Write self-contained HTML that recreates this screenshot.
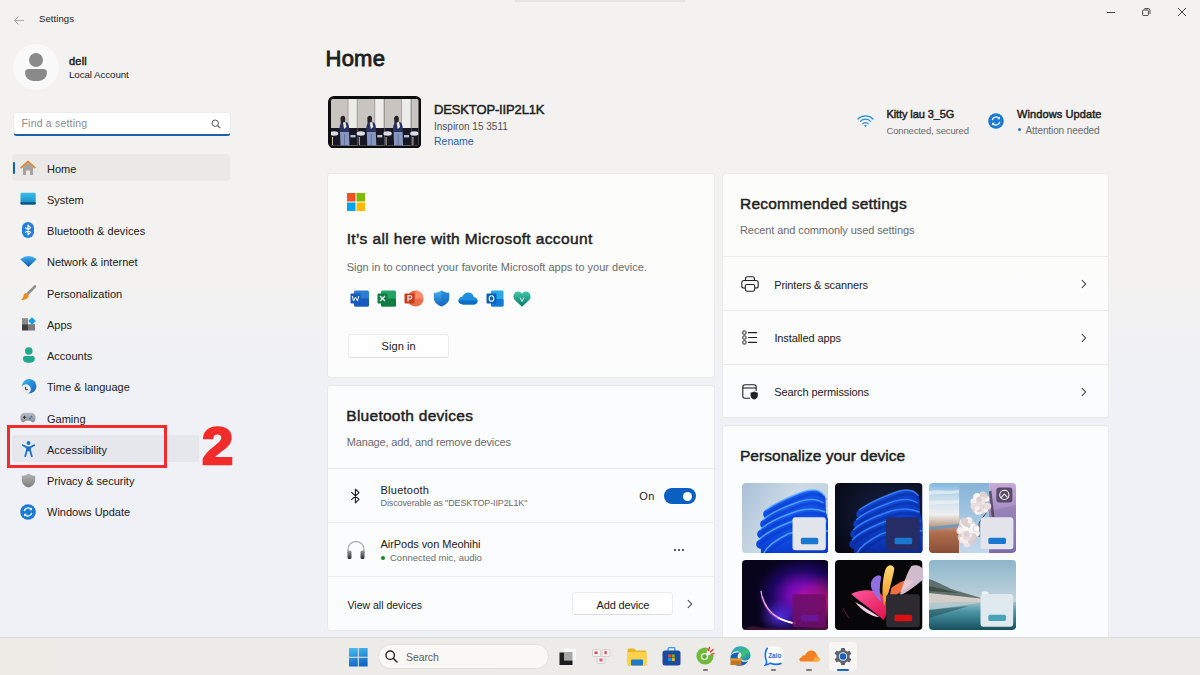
<!DOCTYPE html>
<html><head><meta charset="utf-8">
<style>
*{margin:0;padding:0;box-sizing:border-box}
html,body{width:1200px;height:675px;overflow:hidden}
body{font-family:"Liberation Sans",sans-serif;color:#1b1b1b;position:relative;
background:linear-gradient(180deg,#f3f2f0 0px,#f3f2f0 260px,#f0f1f6 400px,#f0f1f6 675px)}
.a{position:absolute;white-space:nowrap}
.x{position:absolute;white-space:nowrap;line-height:1}
.card{position:absolute;background:rgba(255,255,255,0.74);border:1px solid rgba(0,0,0,0.075);border-radius:4px}
.div{position:absolute;left:0;right:0;height:1px;background:#ebebeb}
.nav{position:absolute;left:11.5px;width:219px;height:27px;border-radius:4px}
.btn{position:absolute;background:#fefefe;border:1px solid #ececec;border-bottom-color:#dedede;border-radius:3.5px}
.tile{top:0;width:26.5px;height:46.5px;background:linear-gradient(90deg,#c4c0bc 0,#cfcbc7 62%,#f0eeea 64%,#f4f2ee 92%,#bdb9b5 94%);}
.tile:before{content:"";position:absolute;left:0;top:27px;width:26.5px;height:19.5px;background:#141827}
.tile:after{content:"";position:absolute;left:9px;top:19px;width:10px;height:27.5px;border-radius:5px 5px 0 0;background:linear-gradient(180deg,#1b1a22 0,#23305e 25%,#3a4a80 55%,#9fb0d0 62%,#6d80b0 100%)}
</style></head><body>

<!-- title bar -->
<div class="a" style="left:515px;top:0;width:170px;height:2px;background:#e6e5e3"></div>
<svg class="a" style="left:13px;top:14.5px" width="12" height="11" viewBox="0 0 12 11"><path d="M11 5.5H1.5M5.5 1.5L1.5 5.5L5.5 9.5" stroke="#ababab" stroke-width="1" fill="none"/></svg>
<div class="a" style="left:1107px;top:11.5px;width:7.5px;height:1px;background:#444"></div>
<svg class="a" style="left:1142px;top:8px" width="9" height="8" viewBox="0 0 9 8"><rect x="0.6" y="2" width="5.8" height="5.6" rx="1.2" stroke="#444" fill="none" stroke-width="1"/><path d="M2.4 0.6h3.8a1.8 1.8 0 0 1 1.8 1.8V5.8" stroke="#444" fill="none" stroke-width="1"/></svg>
<svg class="a" style="left:1177px;top:7px" width="10" height="10" viewBox="0 0 10 10"><path d="M1 1L9 9M9 1L1 9" stroke="#3a3a3a" stroke-width="0.95"/></svg>

<!-- account -->
<div class="a" style="left:13px;top:44px;width:46px;height:46px;border-radius:50%;background:#f9f9f9"></div>
<div class="a" style="left:29px;top:53px;width:14px;height:14px;border-radius:50%;background:#8a8a8a"></div>
<div class="a" style="left:25px;top:69px;width:22px;height:11.5px;border-radius:5px 5px 11px 11px;background:#8a8a8a"></div>

<!-- search -->
<div class="a" style="left:13px;top:111.5px;width:217.5px;height:24.5px;background:#fff;border-radius:4px;border:1px solid #ececec;border-bottom:2px solid #1f5fb0"></div>
<svg class="a" style="left:211px;top:119px" width="10" height="10" viewBox="0 0 10 10"><circle cx="4.2" cy="4.2" r="3.2" stroke="#555" fill="none" stroke-width="1"/><path d="M6.5 6.5L9.2 9.2" stroke="#555" stroke-width="1.1"/></svg>

<!-- nav -->
<div class="nav" style="top:153.5px;height:27.3px;width:218.5px;background:#eae9e7"></div>
<div class="a" style="left:12.5px;top:162px;width:2.6px;height:12px;border-radius:2px;background:#1a5fb4"></div>
<div class="nav" style="top:434.8px;height:27.5px;width:187.5px;border-radius:4px 0 0 4px;background:#e6e7ec"></div>

<!-- nav icons -->
<svg class="a" style="left:20px;top:160px" width="16" height="15" viewBox="0 0 16 15">
 <path d="M3 7.2L8 3L13 7.2V15H10V10.5H6V15H3Z" fill="#a3a3a3"/>
 <path d="M1.2 7.6L8 1.6L14.8 7.6" stroke="#d98532" stroke-width="1.9" fill="none" stroke-linejoin="round" stroke-linecap="round"/>
</svg>
<svg class="a" style="left:20px;top:192px" width="16" height="13" viewBox="0 0 16 13">
 <defs><linearGradient id="gs" x1="0" y1="0" x2="0" y2="1"><stop offset="0" stop-color="#35bfe6"/><stop offset="1" stop-color="#1a8cc4"/></linearGradient></defs>
 <rect x="0.5" y="0.8" width="15.2" height="11.6" rx="1" fill="url(#gs)"/>
 <rect x="0.5" y="10.2" width="15.2" height="2.2" rx="0.8" fill="#0d4f7c"/>
</svg>
<svg class="a" style="left:22px;top:222px" width="12" height="16" viewBox="0 0 12 16">
 <rect x="0" y="0" width="12" height="16" rx="6" fill="#1f7fe0"/>
 <path d="M3.2 5.4L8.6 10.4L6 12.9V3.1L8.6 5.6L3.2 10.6" stroke="#fff" stroke-width="1.2" fill="none" stroke-linejoin="round"/>
</svg>
<svg class="a" style="left:20px;top:256px" width="17" height="11" viewBox="0 0 17 11">
 <defs><linearGradient id="gw" x1="0" y1="0" x2="0" y2="1"><stop offset="0" stop-color="#3fb4f2"/><stop offset="1" stop-color="#0c56a6"/></linearGradient></defs>
 <path d="M8.5 11L0.3 3.3Q8.5 -3.2 16.7 3.3Z" fill="url(#gw)"/>
</svg>
<svg class="a" style="left:20px;top:285px" width="16" height="16" viewBox="0 0 16 16">
 <path d="M15 1.3L7.6 9" stroke="#8f8f8f" stroke-width="2.6" stroke-linecap="round"/>
 <path d="M7.5 8.2C5 7.6 3.6 9.6 3.4 11.3C3.2 13 2.3 14 0.8 14.6C3.7 15.4 7.2 14.5 8.6 11.6Z" fill="#ef8a1c"/>
</svg>
<svg class="a" style="left:22px;top:317px" width="14" height="14" viewBox="0 0 14 14">
 <rect x="0" y="1.2" width="6" height="6" fill="#8a8a8a"/>
 <rect x="0" y="7.2" width="6" height="6.3" fill="#3f3f3f"/>
 <rect x="6" y="7.2" width="7" height="6.3" fill="#7b7b7b"/>
 <path d="M10 0.2L13.8 4L10 7.8L6.2 4Z" fill="#1a9be6"/>
</svg>
<svg class="a" style="left:22px;top:347px" width="14" height="16" viewBox="0 0 14 16">
 <circle cx="6.8" cy="4" r="3.8" fill="#1fa98c"/>
 <path d="M1 11.2C1 9.8 2 9 3.2 9H10.6C11.8 9 12.8 9.8 12.8 11.2V12C12.8 14.4 10.4 15.8 6.9 15.8C3.4 15.8 1 14.4 1 12Z" fill="#1fa98c"/>
</svg>
<svg class="a" style="left:21px;top:378px" width="16" height="17" viewBox="0 0 16 17">
 <defs><linearGradient id="gt" x1="0" y1="0" x2="1" y2="1"><stop offset="0" stop-color="#3ab8f0"/><stop offset="1" stop-color="#0f62c0"/></linearGradient></defs>
 <circle cx="8.2" cy="8.2" r="7.2" fill="url(#gt)"/>
 <circle cx="5" cy="11.2" r="4.4" fill="#ebebee" stroke="#f6f6f8" stroke-width="0.8"/>
 <path d="M4.6 8.8V11.6H6.8" stroke="#3a3a3a" stroke-width="1" fill="none"/>
</svg>
<svg class="a" style="left:20px;top:412px" width="16" height="11" viewBox="0 0 16 11">
 <defs><linearGradient id="gg" x1="0" y1="0" x2="0" y2="1"><stop offset="0" stop-color="#b9bcc2"/><stop offset="1" stop-color="#8a8e96"/></linearGradient></defs>
 <path d="M4 0.8H12C14.3 0.8 15.6 3 15.6 5.6C15.6 8.6 14.5 10.4 12.8 10.4C11.4 10.4 10.8 8.8 9.8 8.8H6.2C5.2 8.8 4.6 10.4 3.2 10.4C1.5 10.4 0.4 8.6 0.4 5.6C0.4 3 1.7 0.8 4 0.8Z" fill="url(#gg)"/>
 <path d="M3 5.3H6M4.5 3.8V6.8" stroke="#333" stroke-width="1"/>
 <circle cx="11.5" cy="4.6" r="0.9" fill="#2a6fc9"/><circle cx="10" cy="6.3" r="0.9" fill="#2a6fc9"/>
</svg>
<svg class="a" style="left:22px;top:441px" width="13" height="16" viewBox="0 0 13 16">
 <circle cx="6.5" cy="2" r="1.9" fill="#1d72c6"/>
 <path d="M0.8 4.3L5 6.4V9L3.2 15.2M12.2 4.3L8 6.4V9L9.8 15.2" stroke="#1d72c6" stroke-width="1.8" fill="none" stroke-linecap="round" stroke-linejoin="round"/>
 <rect x="4.6" y="5.6" width="3.8" height="4.6" rx="1" fill="#1d72c6"/>
</svg>
<svg class="a" style="left:21px;top:473px" width="15" height="15" viewBox="0 0 15 15">
 <defs><linearGradient id="gp" x1="0" y1="0" x2="0" y2="1"><stop offset="0" stop-color="#b4b4b4"/><stop offset="1" stop-color="#7d7d7d"/></linearGradient></defs>
 <path d="M7.5 0.5C5.2 2.2 3.2 2.8 0.8 2.8V7C0.8 10.8 3.6 13.4 7.5 14.6C11.4 13.4 14.2 10.8 14.2 7V2.8C11.8 2.8 9.8 2.2 7.5 0.5Z" fill="url(#gp)"/>
</svg>
<svg class="a" style="left:20px;top:504px" width="16" height="16" viewBox="0 0 16 16">
 <circle cx="8" cy="8" r="7.8" fill="#1b7ad2"/>
 <path d="M4.2 7.2A3.9 3.9 0 0 1 11.2 5.6M11.8 8.8A3.9 3.9 0 0 1 4.8 10.4" stroke="#fff" stroke-width="1.3" fill="none"/>
 <path d="M11.8 3.6V6.3H9.1Z" fill="#fff"/><path d="M4.2 12.4V9.7H6.9Z" fill="#fff"/>
</svg>


<!-- header -->
<svg class="a" style="left:327.5px;top:95.5px" width="93.5" height="52.5" viewBox="0 0 93.5 52.5">
 <defs><clipPath id="dev"><rect x="3" y="3" width="87.5" height="46.5" rx="1.5"/></clipPath></defs>
 <rect x="0" y="0" width="93.5" height="52.5" rx="6" fill="#0c0c0c"/>
 <g clip-path="url(#dev)"><g transform="translate(3 3)"><g transform="translate(0.0 0)"><g>
 <rect x="0" y="0" width="26.8" height="47" fill="#c8c5c1"/>
 <rect x="17.2" y="0" width="8.2" height="47" fill="#eeece8"/>
 <rect x="16.6" y="0" width="0.8" height="47" fill="#9d9a96"/>
 <rect x="0" y="29" width="26.8" height="18" fill="#171824"/>
 <ellipse cx="3" cy="34.5" rx="4.2" ry="2.2" fill="#dcdde6"/>
 <rect x="1" y="38" width="1" height="8" fill="#c8b8b0"/>
 <path d="M9.5 19.5C9.5 17.5 11 16.5 12.4 16.8C14 17.2 14.6 19 14.2 21L13.5 25H9.8Z" fill="#2a2124"/>
 <path d="M8.5 33C8.2 28 8.8 24.5 11 23.5L14.5 22.8C17 23.5 18 26 18.2 30L18 34Z" fill="#28305e"/>
 <path d="M12 23.5L14.5 23L15.5 28L13 30Z" fill="#e8e4e0"/>
 <path d="M9 33H18L18.5 47H9.5Z" fill="#8696c0"/>
 <path d="M13.5 35V47" stroke="#5a6890" stroke-width="0.8"/>
 <rect x="19.5" y="36" width="5" height="2.4" fill="#b8c0d8"/>
</g></g><g transform="translate(26.8 0)"><g>
 <rect x="0" y="0" width="26.8" height="47" fill="#c8c5c1"/>
 <rect x="17.2" y="0" width="8.2" height="47" fill="#eeece8"/>
 <rect x="16.6" y="0" width="0.8" height="47" fill="#9d9a96"/>
 <rect x="0" y="29" width="26.8" height="18" fill="#171824"/>
 <ellipse cx="3" cy="34.5" rx="4.2" ry="2.2" fill="#dcdde6"/>
 <rect x="1" y="38" width="1" height="8" fill="#c8b8b0"/>
 <path d="M9.5 19.5C9.5 17.5 11 16.5 12.4 16.8C14 17.2 14.6 19 14.2 21L13.5 25H9.8Z" fill="#2a2124"/>
 <path d="M8.5 33C8.2 28 8.8 24.5 11 23.5L14.5 22.8C17 23.5 18 26 18.2 30L18 34Z" fill="#28305e"/>
 <path d="M12 23.5L14.5 23L15.5 28L13 30Z" fill="#e8e4e0"/>
 <path d="M9 33H18L18.5 47H9.5Z" fill="#8696c0"/>
 <path d="M13.5 35V47" stroke="#5a6890" stroke-width="0.8"/>
 <rect x="19.5" y="36" width="5" height="2.4" fill="#b8c0d8"/>
</g></g><g transform="translate(53.6 0)"><g>
 <rect x="0" y="0" width="26.8" height="47" fill="#c8c5c1"/>
 <rect x="17.2" y="0" width="8.2" height="47" fill="#eeece8"/>
 <rect x="16.6" y="0" width="0.8" height="47" fill="#9d9a96"/>
 <rect x="0" y="29" width="26.8" height="18" fill="#171824"/>
 <ellipse cx="3" cy="34.5" rx="4.2" ry="2.2" fill="#dcdde6"/>
 <rect x="1" y="38" width="1" height="8" fill="#c8b8b0"/>
 <path d="M9.5 19.5C9.5 17.5 11 16.5 12.4 16.8C14 17.2 14.6 19 14.2 21L13.5 25H9.8Z" fill="#2a2124"/>
 <path d="M8.5 33C8.2 28 8.8 24.5 11 23.5L14.5 22.8C17 23.5 18 26 18.2 30L18 34Z" fill="#28305e"/>
 <path d="M12 23.5L14.5 23L15.5 28L13 30Z" fill="#e8e4e0"/>
 <path d="M9 33H18L18.5 47H9.5Z" fill="#8696c0"/>
 <path d="M13.5 35V47" stroke="#5a6890" stroke-width="0.8"/>
 <rect x="19.5" y="36" width="5" height="2.4" fill="#b8c0d8"/>
</g></g><g transform="translate(80.4 0)"><g>
 <rect x="0" y="0" width="26.8" height="47" fill="#c8c5c1"/>
 <rect x="17.2" y="0" width="8.2" height="47" fill="#eeece8"/>
 <rect x="16.6" y="0" width="0.8" height="47" fill="#9d9a96"/>
 <rect x="0" y="29" width="26.8" height="18" fill="#171824"/>
 <ellipse cx="3" cy="34.5" rx="4.2" ry="2.2" fill="#dcdde6"/>
 <rect x="1" y="38" width="1" height="8" fill="#c8b8b0"/>
 <path d="M9.5 19.5C9.5 17.5 11 16.5 12.4 16.8C14 17.2 14.6 19 14.2 21L13.5 25H9.8Z" fill="#2a2124"/>
 <path d="M8.5 33C8.2 28 8.8 24.5 11 23.5L14.5 22.8C17 23.5 18 26 18.2 30L18 34Z" fill="#28305e"/>
 <path d="M12 23.5L14.5 23L15.5 28L13 30Z" fill="#e8e4e0"/>
 <path d="M9 33H18L18.5 47H9.5Z" fill="#8696c0"/>
 <path d="M13.5 35V47" stroke="#5a6890" stroke-width="0.8"/>
 <rect x="19.5" y="36" width="5" height="2.4" fill="#b8c0d8"/>
</g></g></g>
</g></svg>
<svg class="a" style="left:857px;top:114px" width="17" height="13" viewBox="0 0 17 13">
 <path d="M1 5A10.5 10.5 0 0 1 16 5M3.4 7.4A7 7 0 0 1 13.6 7.4M5.8 9.8A3.6 3.6 0 0 1 11.2 9.8" stroke="#2f8fd8" stroke-width="1.2" fill="none" stroke-linecap="round"/>
 <circle cx="8.5" cy="11.8" r="1.1" fill="#2f8fd8"/>
</svg>
<svg class="a" style="left:988px;top:113px" width="16" height="16" viewBox="0 0 16 16">
 <circle cx="8" cy="8" r="7.8" fill="#1b7ad2"/>
 <path d="M4.2 7.2A3.9 3.9 0 0 1 11.2 5.6M11.8 8.8A3.9 3.9 0 0 1 4.8 10.4" stroke="#fff" stroke-width="1.3" fill="none"/>
 <path d="M11.8 3.6V6.3H9.1Z" fill="#fff"/><path d="M4.2 12.4V9.7H6.9Z" fill="#fff"/>
</svg>


<!-- card 1 -->
<div class="card" style="left:327px;top:173px;width:388px;height:205px"></div>
<svg class="a" style="left:347px;top:193px" width="18" height="18" viewBox="0 0 18 18">
 <rect x="0" y="0" width="8.5" height="8.5" fill="#f25022"/><rect x="9.5" y="0" width="8.5" height="8.5" fill="#7fba00"/>
 <rect x="0" y="9.5" width="8.5" height="8.5" fill="#00a4ef"/><rect x="9.5" y="9.5" width="8.5" height="8.5" fill="#ffb900"/>
</svg>
<!-- app icons -->
<svg class="a" style="left:350px;top:290px" width="20" height="17" viewBox="0 0 20 17">
 <rect x="4" y="0.5" width="15" height="16" rx="1.5" fill="#2b7cd3"/><rect x="4" y="8.5" width="15" height="8" rx="1.5" fill="#185abd"/>
 <rect x="0.5" y="3.5" width="10" height="10" rx="1" fill="#185abd"/><path d="M2.2 6L3.6 11L5.5 7L7.4 11L8.8 6" stroke="#fff" stroke-width="1" fill="none"/>
</svg>
<svg class="a" style="left:377px;top:290px" width="20" height="17" viewBox="0 0 20 17">
 <rect x="4" y="0.5" width="15" height="16" rx="1.5" fill="#21a366"/><rect x="4" y="8.5" width="15" height="8" rx="1.5" fill="#107c41"/>
 <rect x="0.5" y="3.5" width="10" height="10" rx="1" fill="#107c41"/><path d="M3 6L8 11M8 6L3 11" stroke="#fff" stroke-width="1.2"/>
</svg>
<svg class="a" style="left:404px;top:290px" width="20" height="17" viewBox="0 0 20 17">
 <circle cx="11.5" cy="8.5" r="8" fill="#ed6c47"/><path d="M11.5 0.5A8 8 0 0 1 19.5 8.5H11.5Z" fill="#ff8f6b"/>
 <rect x="0.5" y="3.5" width="10" height="10" rx="1" fill="#c43e1c"/><path d="M4 11.5V5.8H6.2A1.6 1.6 0 0 1 6.2 9H4" stroke="#fff" stroke-width="1.1" fill="none"/>
</svg>
<svg class="a" style="left:433px;top:290px" width="17" height="17" viewBox="0 0 17 17">
 <defs><linearGradient id="gd" x1="0" y1="0" x2="0" y2="1"><stop offset="0" stop-color="#46b4f0"/><stop offset="1" stop-color="#1060c0"/></linearGradient></defs>
 <path d="M8.5 0.5C6 2.2 3.5 2.8 0.8 2.8V8C0.8 12 4 14.8 8.5 16.5C13 14.8 16.2 12 16.2 8V2.8C13.5 2.8 11 2.2 8.5 0.5Z" fill="url(#gd)"/>
 <path d="M8.5 0.5V16.5C13 14.8 16.2 12 16.2 8V2.8C13.5 2.8 11 2.2 8.5 0.5Z" fill="#1a70c8" opacity="0.55"/>
</svg>
<svg class="a" style="left:458px;top:292px" width="20" height="13" viewBox="0 0 20 13">
 <path d="M5 12.5C2.2 12.5 0.4 10.8 0.4 8.6C0.4 6.4 2 4.8 4.3 4.7C5.2 2 7.6 0.4 10.3 0.4C13.2 0.4 15.4 2.4 15.9 5C18 5.2 19.6 6.8 19.6 8.9C19.6 11 17.9 12.5 15.8 12.5Z" fill="#1e90e0"/>
 <path d="M5 12.5C2.2 12.5 0.4 10.8 0.4 8.6H19.6C19.6 11 17.9 12.5 15.8 12.5Z" fill="#0f6cc0"/>
</svg>
<svg class="a" style="left:486px;top:290px" width="18" height="17" viewBox="0 0 18 17">
 <rect x="5" y="0.5" width="12.5" height="16" rx="1.3" fill="#28a8ea"/><rect x="5" y="9" width="12.5" height="7.5" rx="1.3" fill="#0f78d4"/>
 <rect x="0.5" y="3.5" width="10" height="10" rx="1" fill="#0a5fb4"/><ellipse cx="5.5" cy="8.5" rx="2.3" ry="2.8" stroke="#fff" stroke-width="1.1" fill="none"/>
</svg>
<svg class="a" style="left:513px;top:291px" width="18" height="16" viewBox="0 0 18 16">
 <defs><linearGradient id="gf" x1="0" y1="0" x2="0" y2="1"><stop offset="0" stop-color="#3fc8a8"/><stop offset="1" stop-color="#0b7a6a"/></linearGradient></defs>
 <path d="M9 15.8L1.8 9C-0.6 6.6 0.2 1.2 4.6 0.6C6.6 0.3 8 1.4 9 2.8C10 1.4 11.4 0.3 13.4 0.6C17.8 1.2 18.6 6.6 16.2 9Z" fill="url(#gf)"/>
 <path d="M7 6.5L9 10.5L11 6.5" stroke="#d8f5ea" stroke-width="1" fill="none"/>
</svg>
<div class="btn" style="left:347.5px;top:333.8px;width:101px;height:23.8px"></div>


<!-- card 2 -->
<div class="card" style="left:327px;top:385px;width:388px;height:246px">
  <div class="div" style="top:82px"></div>
  <div class="div" style="top:136px"></div>
  <div class="div" style="top:190px"></div>
</div>
<svg class="a" style="left:350px;top:487px" width="11" height="18" viewBox="0 0 11 18">
 <path d="M1.3 5.2L9 12.3L5.4 15.8V2.2L9 5.7L1.3 12.8" stroke="#1b1b1b" stroke-width="1.1" fill="none" stroke-linejoin="round"/>
</svg>
<div class="a" style="left:664px;top:488px;width:32px;height:16px;border-radius:8px;background:#0a5fc2"></div>
<div class="a" style="left:682.5px;top:491.5px;width:9.5px;height:9.5px;border-radius:50%;background:#fff"></div>
<svg class="a" style="left:346px;top:540px" width="20" height="20" viewBox="0 0 20 20">
 <defs><linearGradient id="gh" x1="0" y1="0" x2="0" y2="1"><stop offset="0" stop-color="#9a9a9a"/><stop offset="1" stop-color="#2a2a2a"/></linearGradient></defs>
 <path d="M2 13V9.5A8 8 0 0 1 18 9.5V13" stroke="#b0b0b0" stroke-width="1.4" fill="none"/>
 <rect x="1.5" y="10.5" width="4" height="8.5" rx="1.5" fill="url(#gh)"/><rect x="14.5" y="10.5" width="4" height="8.5" rx="1.5" fill="url(#gh)"/>
</svg>
<div class="a" style="left:380.5px;top:555.5px;width:4px;height:4px;border-radius:50%;background:#138a1c"></div>
<div class="a" style="left:674px;top:549px;width:2px;height:2px;background:#222;border-radius:1px"></div>
<div class="a" style="left:678px;top:549px;width:2px;height:2px;background:#222;border-radius:1px"></div>
<div class="a" style="left:682px;top:549px;width:2px;height:2px;background:#222;border-radius:1px"></div>
<div class="btn" style="left:572.3px;top:591.5px;width:100.8px;height:23.8px"></div>
<svg class="a" style="left:685px;top:598px" width="9" height="12" viewBox="0 0 9 12"><path d="M2.8 2L6.6 6L2.8 10" stroke="#333" stroke-width="1.05" fill="none"/></svg>


<!-- card 3 -->
<div class="card" style="left:722px;top:173px;width:387px;height:245px">
  <div class="div" style="top:82px"></div>
  <div class="div" style="top:136px"></div>
  <div class="div" style="top:190px"></div>
</div>
<svg class="a" style="left:741px;top:276px" width="18" height="16" viewBox="0 0 18 16">
 <path d="M4.5 4.5V2.8A2 2 0 0 1 6.5 0.8H11.5A2 2 0 0 1 13.5 2.8V4.5" stroke="#222" stroke-width="1.1" fill="none"/>
 <path d="M4.3 12H2.8A2 2 0 0 1 0.8 10V6.5A2 2 0 0 1 2.8 4.5H15.2A2 2 0 0 1 17.2 6.5V10A2 2 0 0 1 15.2 12H13.7" stroke="#222" stroke-width="1.1" fill="none"/>
 <rect x="4.3" y="8.5" width="9.4" height="6.7" rx="1.6" stroke="#222" stroke-width="1.1" fill="none"/>
</svg>
<svg class="a" style="left:742px;top:330px" width="16" height="15" viewBox="0 0 16 15">
 <rect x="0.8" y="1" width="3.2" height="3.2" rx="0.8" stroke="#222" stroke-width="1" fill="none"/>
 <rect x="0.8" y="5.9" width="3.2" height="3.2" rx="0.8" stroke="#222" stroke-width="1" fill="none"/>
 <rect x="0.8" y="10.8" width="3.2" height="3.2" rx="0.8" stroke="#222" stroke-width="1" fill="none"/>
 <path d="M6 2.6H15M6 7.5H15M6 12.4H15" stroke="#222" stroke-width="1.1"/>
</svg>
<svg class="a" style="left:742px;top:384px" width="17" height="16" viewBox="0 0 17 16">
 <path d="M8 14.3H3A2.2 2.2 0 0 1 0.8 12.1V3A2.2 2.2 0 0 1 3 0.8H12A2.2 2.2 0 0 1 14.2 3V7" stroke="#222" stroke-width="1.1" fill="none"/>
 <path d="M0.8 4H14.2" stroke="#222" stroke-width="1.1"/>
 <path d="M12.2 7.2C11 8.2 10 8.5 8.6 8.5V11.4C8.6 13.4 10 14.8 12.2 15.6C14.4 14.8 15.8 13.4 15.8 11.4V8.5C14.4 8.5 13.4 8.2 12.2 7.2Z" fill="#222"/>
</svg>
<svg class="a" style="left:1079px;top:278px" width="9" height="12" viewBox="0 0 9 12"><path d="M2.8 2L6.6 6L2.8 10" stroke="#333" stroke-width="1.05" fill="none"/></svg>
<svg class="a" style="left:1079px;top:332px" width="9" height="12" viewBox="0 0 9 12"><path d="M2.8 2L6.6 6L2.8 10" stroke="#333" stroke-width="1.05" fill="none"/></svg>
<svg class="a" style="left:1079px;top:386px" width="9" height="12" viewBox="0 0 9 12"><path d="M2.8 2L6.6 6L2.8 10" stroke="#333" stroke-width="1.05" fill="none"/></svg>


<!-- card 4 -->
<div class="card" style="left:722px;top:425px;width:387px;height:230px"></div>
<!-- thumbs -->
<svg class="a thumb" style="left:741.5px;top:482.8px" width="86.5" height="70" viewBox="0 0 87 70" preserveAspectRatio="none">
 <defs>
  <linearGradient id="t1bg" x1="0" y1="0" x2="1" y2="0.5"><stop offset="0" stop-color="#a9c0d6"/><stop offset="0.55" stop-color="#cddae6"/><stop offset="1" stop-color="#bccfe0"/></linearGradient>
  <linearGradient id="PA" x1="0" y1="0" x2="0.3" y2="1"><stop offset="0" stop-color="#2470ff"/><stop offset="0.35" stop-color="#1050e8"/><stop offset="1" stop-color="#0a3cd0"/></linearGradient>
  <linearGradient id="PB" x1="0" y1="0" x2="0.3" y2="1"><stop offset="0" stop-color="#2060f0"/><stop offset="0.35" stop-color="#0c40c8"/><stop offset="1" stop-color="#0a2aa0"/></linearGradient>
  <clipPath id="cr"><rect width="87" height="70" rx="4"/></clipPath>
 </defs>
 <g clip-path="url(#cr)">
 <rect width="87" height="70" fill="url(#t1bg)"/>
 <path d="M26 36C20 35 20 29 24 27C32 21 45 15 58 10C68 6 78 5 83 13C86 21 82 29 87 37L87 70L26 70Z" fill="url(#PA)"/>
 <path d="M24 27C32 21 45 15 58 10C68 6 78 5 83 13" transform="translate(1.5 4)" stroke="#0a2ab8" stroke-width="3" fill="none" opacity="0.35"/><path d="M24 27C32 21 45 15 58 10C68 6 78 5 83 13" stroke="#5aaeff" stroke-width="1.4" fill="none" opacity="0.85"/>
 <path d="M23 46C17 45 17 39 21 37C28 30 40 25 54 20C64 16 74 14 82 20C85 26 84 32 87 40L87 70L23 70Z" fill="url(#PA)"/>
 <path d="M21 37C28 30 40 25 54 20C64 16 74 14 82 20" transform="translate(1.5 4)" stroke="#0a2ab8" stroke-width="3" fill="none" opacity="0.35"/><path d="M21 37C28 30 40 25 54 20C64 16 74 14 82 20" stroke="#5aaeff" stroke-width="1.4" fill="none" opacity="0.85"/>
 <path d="M20 56C14 55 14 49 18 47C25 40 36 35 50 30C60 26 72 24 84 29L87 70L20 70Z" fill="url(#PA)"/>
 <path d="M18 47C25 40 36 35 50 30C60 26 72 24 84 29" transform="translate(1.5 4)" stroke="#0a2ab8" stroke-width="3" fill="none" opacity="0.35"/><path d="M18 47C25 40 36 35 50 30C60 26 72 24 84 29" stroke="#5aaeff" stroke-width="1.4" fill="none" opacity="0.85"/>
 <path d="M19 66C13 65 13 59 17 57C23 50 34 45 46 40C56 36 68 34 85 38L87 70L19 70Z" fill="url(#PA)"/>
 <path d="M17 57C23 50 34 45 46 40C56 36 68 34 85 38" transform="translate(1.5 4)" stroke="#0a2ab8" stroke-width="3" fill="none" opacity="0.35"/><path d="M17 57C23 50 34 45 46 40C56 36 68 34 85 38" stroke="#5aaeff" stroke-width="1.4" fill="none" opacity="0.85"/>
 <path d="M22 70C26 62 36 56 46 51C56 47 68 45 87 48L87 70Z" fill="url(#PA)"/>
 <path d="M22 70C26 62 36 56 46 51C56 47 68 45 87 48" transform="translate(1.5 4)" stroke="#0a2ab8" stroke-width="3" fill="none" opacity="0.35"/><path d="M22 70C26 62 36 56 46 51C56 47 68 45 87 48" stroke="#5aaeff" stroke-width="1.4" fill="none" opacity="0.85"/>
 <rect x="50.8" y="34.2" width="33.5" height="33" rx="3" fill="#e3e5ec"/>
 <rect x="59.2" y="54.8" width="17.5" height="6.4" rx="1.5" fill="#1a78d0"/>
 </g>
</svg>
<svg class="a thumb" style="left:835px;top:482.8px" width="87.5" height="70" viewBox="0 0 87 70" preserveAspectRatio="none">
 <defs>
  <radialGradient id="t2bg" cx="0.65" cy="0.45" r="0.8"><stop offset="0" stop-color="#18224a"/><stop offset="1" stop-color="#060912"/></radialGradient>
 </defs>
 <g clip-path="url(#cr)">
 <rect width="87" height="70" fill="url(#t2bg)"/>
 <path d="M26 36C20 35 20 29 24 27C32 21 45 15 58 10C68 6 78 5 83 13C86 21 82 29 87 37L87 70L26 70Z" fill="url(#PB)"/>
 <path d="M24 27C32 21 45 15 58 10C68 6 78 5 83 13" transform="translate(1.5 4)" stroke="#061c80" stroke-width="3" fill="none" opacity="0.35"/><path d="M24 27C32 21 45 15 58 10C68 6 78 5 83 13" stroke="#3f86ff" stroke-width="1.4" fill="none" opacity="0.85"/>
 <path d="M23 46C17 45 17 39 21 37C28 30 40 25 54 20C64 16 74 14 82 20C85 26 84 32 87 40L87 70L23 70Z" fill="url(#PB)"/>
 <path d="M21 37C28 30 40 25 54 20C64 16 74 14 82 20" transform="translate(1.5 4)" stroke="#061c80" stroke-width="3" fill="none" opacity="0.35"/><path d="M21 37C28 30 40 25 54 20C64 16 74 14 82 20" stroke="#3f86ff" stroke-width="1.4" fill="none" opacity="0.85"/>
 <path d="M20 56C14 55 14 49 18 47C25 40 36 35 50 30C60 26 72 24 84 29L87 70L20 70Z" fill="url(#PB)"/>
 <path d="M18 47C25 40 36 35 50 30C60 26 72 24 84 29" transform="translate(1.5 4)" stroke="#061c80" stroke-width="3" fill="none" opacity="0.35"/><path d="M18 47C25 40 36 35 50 30C60 26 72 24 84 29" stroke="#3f86ff" stroke-width="1.4" fill="none" opacity="0.85"/>
 <path d="M19 66C13 65 13 59 17 57C23 50 34 45 46 40C56 36 68 34 85 38L87 70L19 70Z" fill="url(#PB)"/>
 <path d="M17 57C23 50 34 45 46 40C56 36 68 34 85 38" transform="translate(1.5 4)" stroke="#061c80" stroke-width="3" fill="none" opacity="0.35"/><path d="M17 57C23 50 34 45 46 40C56 36 68 34 85 38" stroke="#3f86ff" stroke-width="1.4" fill="none" opacity="0.85"/>
 <path d="M22 70C26 62 36 56 46 51C56 47 68 45 87 48L87 70Z" fill="url(#PB)"/>
 <path d="M22 70C26 62 36 56 46 51C56 47 68 45 87 48" transform="translate(1.5 4)" stroke="#061c80" stroke-width="3" fill="none" opacity="0.35"/><path d="M22 70C26 62 36 56 46 51C56 47 68 45 87 48" stroke="#3f86ff" stroke-width="1.4" fill="none" opacity="0.85"/>
 <rect x="50.8" y="34.2" width="33.5" height="33" rx="3" fill="#252c66"/>
 <rect x="59.2" y="54.8" width="17.5" height="6.4" rx="1.5" fill="#1a78d0"/>
 </g>
</svg>
<svg class="a thumb" style="left:928.8px;top:482.8px" width="87.2" height="70" viewBox="0 0 87 70" preserveAspectRatio="none">
 <defs>
  <linearGradient id="t3a" x1="0" y1="0" x2="0" y2="1"><stop offset="0" stop-color="#7fb6e0"/><stop offset="0.2" stop-color="#c8dcea"/><stop offset="0.45" stop-color="#eef0f0"/><stop offset="0.58" stop-color="#c8b0a0"/><stop offset="0.7" stop-color="#b07050"/><stop offset="1" stop-color="#8a4e34"/></linearGradient>
  <linearGradient id="t3b" x1="0" y1="0" x2="0" y2="1"><stop offset="0" stop-color="#86b4d8"/><stop offset="1" stop-color="#c4d8ea"/></linearGradient>
  <linearGradient id="t3c" x1="0" y1="0" x2="0" y2="1"><stop offset="0" stop-color="#c8aad8"/><stop offset="0.5" stop-color="#9c84c2"/><stop offset="1" stop-color="#7c6aaa"/></linearGradient>
 </defs>
 <g clip-path="url(#cr)">
 <rect width="30" height="70" fill="url(#t3a)"/>
 <path d="M0 8C8 6 18 9 30 7V10C18 12 8 10 0 12Z" fill="#ffffff" opacity="0.5"/>
 <path d="M0 18C10 16 20 19 30 17V20C20 22 10 20 0 22Z" fill="#ffffff" opacity="0.4"/>
 <path d="M0 44L30 41V44L0 47Z" fill="#5a98c8" opacity="0.75"/>
 <rect x="30" width="30" height="70" fill="url(#t3b)"/>
 <rect x="60" width="27" height="70" fill="url(#t3c)"/>
 <path d="M60 28L87 22V44L60 50Z" fill="#8a78a8" opacity="0.5"/>
 <path d="M61 8L64 34" stroke="#3a2a38" stroke-width="2.6" opacity="0.65"/>
 <path d="M60 26L54 34L50 40V54" stroke="#3a2c30" stroke-width="0.9" fill="none"/>
 <circle cx="47.8" cy="20.8" r="2.7" fill="#dccfd0"/><circle cx="51.6" cy="21.5" r="3.0" fill="#fbf8f6"/><circle cx="48.1" cy="15.2" r="3.6" fill="#fbf8f6"/><circle cx="52.7" cy="20.9" r="2.8" fill="#efe4e2"/><circle cx="47.7" cy="13.7" r="3.5" fill="#fbf8f6"/><circle cx="55.9" cy="23.1" r="2.3" fill="#dccfd0"/><circle cx="57.2" cy="15.8" r="3.0" fill="#fbf8f6"/><circle cx="55.4" cy="27.6" r="2.8" fill="#dccfd0"/><circle cx="51.1" cy="27.8" r="3.4" fill="#f6f0ee"/><circle cx="44.6" cy="19.9" r="2.6" fill="#fbf8f6"/><circle cx="56.5" cy="26.4" r="2.8" fill="#fbf8f6"/><circle cx="53.2" cy="20.6" r="2.8" fill="#efe4e2"/><circle cx="58.5" cy="23.3" r="3.5" fill="#e8dcdc"/><circle cx="46.6" cy="26.5" r="3.6" fill="#dccfd0"/><circle cx="53.1" cy="23.8" r="2.5" fill="#dccfd0"/><circle cx="48.3" cy="13.2" r="2.9" fill="#fbf8f6"/><circle cx="50.6" cy="13.7" r="2.6" fill="#fbf8f6"/><circle cx="53.8" cy="11.8" r="3.2" fill="#e8dcdc"/><circle cx="52.8" cy="27.6" r="2.6" fill="#efe4e2"/><circle cx="45.2" cy="21.8" r="2.2" fill="#efe4e2"/><circle cx="48.2" cy="23.4" r="3.6" fill="#e8dcdc"/><circle cx="49.0" cy="28.3" r="3.5" fill="#fbf8f6"/><circle cx="50.0" cy="26.7" r="2.7" fill="#dccfd0"/><circle cx="54.9" cy="12.8" r="3.6" fill="#dccfd0"/><circle cx="48.3" cy="22.4" r="3.2" fill="#e8dcdc"/><circle cx="51.0" cy="15.6" r="2.6" fill="#e8dcdc"/><circle cx="44.2" cy="18.5" r="3.0" fill="#f6f0ee"/><circle cx="50.0" cy="21.6" r="2.4" fill="#e8dcdc"/><circle cx="51.5" cy="23.2" r="2.7" fill="#e8dcdc"/><circle cx="45.0" cy="23.2" r="3.5" fill="#e8dcdc"/><circle cx="54.0" cy="16.4" r="3.0" fill="#efe4e2"/><circle cx="49.8" cy="16.6" r="2.7" fill="#dccfd0"/><circle cx="48.2" cy="25.2" r="2.3" fill="#f6f0ee"/><circle cx="32.4" cy="49.0" r="3.1" fill="#e8dcdc"/><circle cx="34.3" cy="40.9" r="2.8" fill="#f6f0ee"/><circle cx="31.8" cy="44.4" r="2.7" fill="#efe4e2"/><circle cx="37.9" cy="58.2" r="2.4" fill="#e8dcdc"/><circle cx="43.4" cy="41.7" r="3.0" fill="#e8dcdc"/><circle cx="34.1" cy="39.1" r="2.9" fill="#efe4e2"/><circle cx="35.7" cy="57.7" r="3.0" fill="#e8dcdc"/><circle cx="36.1" cy="57.5" r="2.3" fill="#dccfd0"/><circle cx="36.2" cy="39.4" r="2.6" fill="#e8dcdc"/><circle cx="38.4" cy="52.5" r="2.6" fill="#dccfd0"/><circle cx="37.4" cy="59.9" r="2.4" fill="#f6f0ee"/><circle cx="38.6" cy="57.6" r="3.1" fill="#dccfd0"/><circle cx="37.8" cy="60.7" r="3.5" fill="#efe4e2"/><circle cx="30.6" cy="47.9" r="3.3" fill="#dccfd0"/><circle cx="47.3" cy="50.1" r="3.4" fill="#f6f0ee"/><circle cx="32.2" cy="42.4" r="2.2" fill="#dccfd0"/><circle cx="46.2" cy="51.0" r="2.2" fill="#f6f0ee"/><circle cx="33.1" cy="43.8" r="3.1" fill="#dccfd0"/><circle cx="39.7" cy="37.4" r="3.5" fill="#f6f0ee"/><circle cx="36.1" cy="42.6" r="3.4" fill="#fbf8f6"/><circle cx="34.0" cy="39.2" r="3.4" fill="#f6f0ee"/><circle cx="33.1" cy="56.6" r="3.5" fill="#efe4e2"/><circle cx="41.3" cy="58.4" r="2.3" fill="#e8dcdc"/><circle cx="34.5" cy="52.1" r="2.9" fill="#f6f0ee"/><circle cx="38.5" cy="56.2" r="2.2" fill="#f6f0ee"/><circle cx="30.9" cy="48.6" r="2.2" fill="#f6f0ee"/><circle cx="39.3" cy="48.7" r="2.4" fill="#f6f0ee"/><circle cx="36.3" cy="52.8" r="3.0" fill="#e8dcdc"/><circle cx="37.7" cy="39.3" r="2.2" fill="#fbf8f6"/><circle cx="44.3" cy="50.7" r="2.3" fill="#fbf8f6"/><circle cx="40.9" cy="56.3" r="2.7" fill="#f6f0ee"/><circle cx="41.2" cy="47.2" r="2.7" fill="#fbf8f6"/><circle cx="43.7" cy="44.2" r="3.5" fill="#fbf8f6"/><circle cx="38.3" cy="42.4" r="3.0" fill="#dccfd0"/><circle cx="31.3" cy="47.0" r="2.8" fill="#f6f0ee"/><circle cx="46.9" cy="45.7" r="3.5" fill="#e8dcdc"/><circle cx="32.2" cy="54.0" r="3.5" fill="#dccfd0"/><circle cx="44.3" cy="53.4" r="3.2" fill="#dccfd0"/><circle cx="39.6" cy="57.1" r="3.2" fill="#fbf8f6"/><circle cx="32.6" cy="56.1" r="2.3" fill="#f6f0ee"/><circle cx="40.2" cy="53.1" r="2.7" fill="#f6f0ee"/><circle cx="36.1" cy="58.2" r="2.2" fill="#f6f0ee"/><circle cx="42.1" cy="57.7" r="3.5" fill="#dccfd0"/><circle cx="35.4" cy="38.3" r="3.6" fill="#dccfd0"/><circle cx="39.2" cy="54.6" r="2.3" fill="#f6f0ee"/><circle cx="35.8" cy="50.7" r="3.4" fill="#efe4e2"/><circle cx="38.2" cy="54.2" r="3.5" fill="#e8dcdc"/><circle cx="36.6" cy="46.3" r="2.7" fill="#fbf8f6"/><circle cx="47.4" cy="45.8" r="2.5" fill="#fbf8f6"/><circle cx="37.5" cy="50.8" r="3.0" fill="#dccfd0"/>
 <rect x="67.2" y="4.4" width="16" height="15" rx="3" fill="#5a4a6a"/>
 <circle cx="75.2" cy="11.9" r="4.6" stroke="#fff" stroke-width="1" fill="none"/>
 <path d="M72 14.7L75.2 11L78.4 14.7" stroke="#fff" stroke-width="1" fill="none"/>
 <rect x="51.6" y="34.2" width="32.6" height="32" rx="3" fill="#e4e4ec"/>
 <rect x="59.2" y="54.8" width="17.6" height="6.2" rx="1.5" fill="#1a78d0"/>
 </g>
</svg>
<svg class="a thumb" style="left:741.5px;top:559.6px" width="86.5" height="70" viewBox="0 0 87 70" preserveAspectRatio="none">
 <defs>
  <radialGradient id="t4bg" cx="0.7" cy="0.5" r="0.55"><stop offset="0" stop-color="#a010b8"/><stop offset="0.3" stop-color="#700ab0"/><stop offset="0.65" stop-color="#1c0660"/><stop offset="1" stop-color="#08041c"/></radialGradient>
  <radialGradient id="t4r" cx="1" cy="0.62" r="0.42"><stop offset="0" stop-color="#e0185a" stop-opacity="0.75"/><stop offset="1" stop-color="#e0185a" stop-opacity="0"/></radialGradient>
  <radialGradient id="t4b" cx="0.44" cy="0.8" r="0.25"><stop offset="0" stop-color="#5a30f0" stop-opacity="0.85"/><stop offset="1" stop-color="#5a30f0" stop-opacity="0"/></radialGradient>
 </defs>
 <g clip-path="url(#cr)">
 <rect width="87" height="70" fill="url(#t4bg)"/>
 <rect width="87" height="70" fill="url(#t4r)"/>
 <rect width="87" height="70" fill="url(#t4b)"/>
 <path d="M19 31C21 44 28 53 37 58C42 61 46 62 54 63.5" stroke="#ffd8f8" stroke-width="1.1" fill="none"/><path d="M36 57.5C42 61 46 62 54 63.5" stroke="#ffffff" stroke-width="1.8" fill="none"/>
 <path d="M20 36C23 47 29 55 38 59" stroke="#e070d0" stroke-width="2.6" fill="none" opacity="0.4"/>
 <path d="M10 66C30 70 60 70 87 64V70H0Z" fill="#7a2050" opacity="0.45"/>
 <rect x="50.8" y="34.2" width="33.5" height="33" rx="3" fill="#6e0e6a" opacity="0.9"/>
 <rect x="59.2" y="54.8" width="17.5" height="6.4" rx="1.5" fill="#6a18a8" opacity="0.7"/>
 </g>
</svg>
<svg class="a thumb" style="left:835px;top:559.6px" width="87.5" height="70" viewBox="0 0 87 70" preserveAspectRatio="none">
 <defs>
  <linearGradient id="p1" x1="0" y1="0" x2="1" y2="1"><stop offset="0" stop-color="#ff5aa0"/><stop offset="1" stop-color="#e0104a"/></linearGradient>
  <linearGradient id="p2" x1="0" y1="0" x2="0" y2="1"><stop offset="0" stop-color="#ffd870"/><stop offset="1" stop-color="#f09020"/></linearGradient>
 </defs>
 <g clip-path="url(#cr)">
 <rect width="87" height="70" fill="#070609"/>
 <path d="M16 34C26 29 38 29 46 34C52 42 54 54 48 60C40 52 28 44 16 34Z" fill="url(#p1)"/>
 <path d="M20 42C28 46 36 52 44 57C36 57 26 50 20 42Z" fill="#f4d0e8"/>
 <path d="M36 22C38 16 44 14 46 17C44 26 44 34 46 42C40 36 34 28 36 22Z" fill="#9070e0"/>
 <path d="M50 10C52 4 58 4 59 9C57 20 53 34 49 46C46 34 47 20 50 10Z" fill="url(#p2)"/>
 <path d="M56 28C64 22 72 18 78 21C72 28 64 34 54 38Z" fill="#f07040"/>
 <path d="M76 6C80 4 86 6 87 9V20C80 26 72 32 64 36C68 24 72 12 76 6Z" fill="#e8d0e4" opacity="0.9"/>
 <path d="M8 48C10 52 12 56 14 58" stroke="#5a2028" stroke-width="1" fill="none"/>
 <rect x="50.8" y="34.2" width="33.5" height="33" rx="3" fill="#2e2a32"/>
 <rect x="59.2" y="54.8" width="17.5" height="6.4" rx="1.5" fill="#dd1010"/>
 </g>
</svg>
<svg class="a thumb" style="left:928.8px;top:559.6px" width="87.2" height="70" viewBox="0 0 87 70" preserveAspectRatio="none">
 <defs>
  <linearGradient id="t6s" x1="0" y1="0" x2="0" y2="1"><stop offset="0" stop-color="#8db6c8"/><stop offset="1" stop-color="#c4d6de"/></linearGradient>
  <linearGradient id="t6w" x1="0" y1="0" x2="0" y2="1"><stop offset="0" stop-color="#9cc0c8"/><stop offset="0.35" stop-color="#4a94a4"/><stop offset="1" stop-color="#17505f"/></linearGradient>
 </defs>
 <g clip-path="url(#cr)">
 <rect width="87" height="44" fill="url(#t6s)"/>
 <rect y="42" width="87" height="28" fill="url(#t6w)"/>
 <path d="M0 19C6 21 14 25 22 29C32 32 42 35 52 38L53 40L0 34Z" fill="#3a4a40" opacity="0.7"/><path d="M0 26C10 28 20 31 30 33L0 31Z" fill="#1e2a24" opacity="0.5"/>
 <path d="M0 33L52 38.5L55 42L0 43Z" fill="#d4cdc8"/>
 <path d="M0 43L55 42L30 46L0 50Z" fill="#b8ccd0" opacity="0.9"/>
 <path d="M0 50L40 46L0 58Z" fill="#1e4048" opacity="0.45"/>
 <ellipse cx="56" cy="33" rx="3.5" ry="1.8" fill="#f4f8fa" opacity="0.9"/>
 <rect x="51.4" y="34" width="32.6" height="32.7" rx="3" fill="#e0eaee"/>
 <rect x="59.2" y="54.7" width="17.6" height="6.3" rx="1.5" fill="#4aa2b8"/>
 </g>
</svg>

<!-- taskbar -->
<div class="a" style="left:0;top:636.5px;width:1200px;height:38.5px;background:linear-gradient(90deg,#eeebe7 0%,#edebe8 50%,#ecebea 100%);border-top:1px solid #dcdcde"></div>
<svg class="a" style="left:348.5px;top:647.5px" width="19" height="19" viewBox="0 0 19 19">
 <defs><linearGradient id="wl" x1="0" y1="0" x2="0.3" y2="1"><stop offset="0" stop-color="#48c0f4"/><stop offset="1" stop-color="#1268c4"/></linearGradient></defs>
 <path d="M0 0H8.8V8.8H0ZM9.8 0H18.6V8.8H9.8ZM0 9.8H8.8V18.6H0ZM9.8 9.8H18.6V18.6H9.8Z" fill="url(#wl)"/>
</svg>
<div class="a" style="left:377.5px;top:644px;width:171px;height:24.5px;border-radius:12.5px;background:#faf8f5;border:1px solid #e2dfdb"></div>
<svg class="a" style="left:385px;top:650px" width="13" height="13" viewBox="0 0 13 13"><circle cx="5.2" cy="5.2" r="4.2" stroke="#2a2a2a" stroke-width="1.4" fill="none"/><path d="M8.2 8.2L12 12" stroke="#2a2a2a" stroke-width="1.5" stroke-linecap="round"/></svg>
<!-- task view -->
<svg class="a" style="left:558.5px;top:647.5px" width="18" height="18" viewBox="0 0 18 18">
 <rect x="5" y="0.5" width="12" height="12" fill="#f6f6f6"/>
 <rect x="5" y="4" width="8.5" height="8.5" fill="#a6a6a6"/>
 <path d="M0.5 4.5H5V12.5H13.5V17H0.5Z" fill="#1e1e1e"/>
</svg>
<!-- unikey -->
<svg class="a" style="left:592px;top:649px" width="20" height="15" viewBox="0 0 20 15">
 <rect x="0.5" y="0.5" width="8" height="7" rx="1" fill="#f4f0f0" stroke="#c8c0c0" stroke-width="0.6"/>
 <rect x="10" y="0.5" width="8" height="7" rx="1" fill="#f4f0f0" stroke="#c8c0c0" stroke-width="0.6"/>
 <rect x="5" y="7.5" width="8" height="7" rx="1" fill="#f4f0f0" stroke="#c8c0c0" stroke-width="0.6"/>
 <rect x="2.5" y="2.5" width="3" height="2.5" fill="#d84060"/><rect x="12.5" y="2.2" width="2.2" height="3" fill="#d84060"/><rect x="7.5" y="9.5" width="3" height="3" fill="#d86080"/>
</svg>
<!-- folder -->
<svg class="a" style="left:627px;top:647.5px" width="20" height="18" viewBox="0 0 20 18">
 <path d="M0.5 2A1.5 1.5 0 0 1 2 0.5H7L9 2.5H18A1.5 1.5 0 0 1 19.5 4V16A1.5 1.5 0 0 1 18 17.5H2A1.5 1.5 0 0 1 0.5 16Z" fill="#e8b32a"/>
 <rect x="0.5" y="4" width="19" height="13.5" rx="1.2" fill="#ffd24a"/>
 <rect x="4" y="11.5" width="12" height="6" rx="1" fill="#1a78d0"/>
</svg>
<!-- store -->
<svg class="a" style="left:661.5px;top:647px" width="19" height="19" viewBox="0 0 19 19">
 <path d="M6 4V2.2A1.7 1.7 0 0 1 7.7 0.5H11.3A1.7 1.7 0 0 1 13 2.2V4" stroke="#3a9ae8" stroke-width="1.3" fill="none"/>
 <rect x="0.5" y="3.5" width="18" height="15" rx="2.5" fill="#1a4aa0"/>
 <rect x="6.2" y="7.5" width="3" height="3" fill="#f25022"/><rect x="9.8" y="7.5" width="3" height="3" fill="#7fba00"/>
 <rect x="6.2" y="11.1" width="3" height="3" fill="#00a4ef"/><rect x="9.8" y="11.1" width="3" height="3" fill="#ffb900"/>
</svg>
<!-- coccoc -->
<svg class="a" style="left:696px;top:646px" width="19" height="19" viewBox="0 0 19 19">
 <circle cx="9" cy="10" r="8.6" fill="#6fba3a"/>
 <path d="M9 10L13.5 0L19 0L19 8Z" fill="#edebe8"/>
 <circle cx="8.5" cy="10.5" r="3.6" fill="#e8f4d8"/><circle cx="8.5" cy="10.5" r="2.2" fill="#5aa838"/>
 <path d="M12.5 4.5L13.5 1.5M14.5 6L17 3.5M15.2 8.4L18 7.4" stroke="#e83a3a" stroke-width="1.4" stroke-linecap="round"/>
</svg>
<div class="a" style="left:702.5px;top:668.5px;width:5.5px;height:2px;border-radius:1px;background:#7a7a7a"></div>
<!-- edge -->
<svg class="a" style="left:729.5px;top:646px" width="21" height="20" viewBox="0 0 21 20">
 <defs><linearGradient id="ed" x1="0" y1="0" x2="1" y2="1"><stop offset="0" stop-color="#2a9ae0"/><stop offset="0.6" stop-color="#3ac07a"/><stop offset="1" stop-color="#1a70c0"/></linearGradient></defs>
 <path d="M10.5 0.3C16.2 0.3 20.5 4.4 20.5 9.2C20.5 12.8 17.8 14.6 14.8 14.6C12 14.6 10.4 13.2 10.4 11.6C10.4 10.4 11.4 10.2 11.4 9C11.4 7 9.2 5.2 6.6 5.2C3.2 5.2 0.5 8 0.5 11.4C0.5 5 4.8 0.3 10.5 0.3Z" fill="url(#ed)"/>
 <path d="M0.5 11.4C0.5 16 4.2 19.7 9.8 19.7C13.6 19.7 16.6 17.6 18.2 15.2C17 15.6 15.8 15.8 14.6 15.8C10.6 15.8 7.6 13.2 7.6 10.8C7.6 9 8.6 7.6 9.8 6.6C5 6.2 0.5 8 0.5 11.4Z" fill="#1560b8"/>
 <rect x="0.5" y="12.5" width="11" height="6.5" fill="#c8741c"/>
 <rect x="0.5" y="12.5" width="11" height="2" fill="#e89a3a"/>
</svg>
<!-- zalo -->
<svg class="a" style="left:764px;top:646px" width="20" height="20" viewBox="0 0 20 20">
 <rect x="0.5" y="0.5" width="19" height="19" rx="7" fill="#ffffff"/>
 <path d="M3.5 1.8C1.2 5 0.8 10.5 2.4 15C3 16.5 2.6 17.8 1.4 19C4 18.8 5.6 17.8 6.4 17.2C9.6 18.6 14.4 18.6 17.6 17.2" stroke="#1a6ae8" stroke-width="1.6" fill="none"/>
 <text x="10.8" y="12.2" font-family="Liberation Sans" font-size="6.4" font-weight="bold" fill="#1a6ae8" text-anchor="middle">Zalo</text>
</svg>
<div class="a" style="left:770.5px;top:668.5px;width:5.5px;height:2px;border-radius:1px;background:#7a7a7a"></div>
<!-- cloudflare -->
<svg class="a" style="left:798.5px;top:649.5px" width="21" height="12" viewBox="0 0 21 12">
 <path d="M2.5 11.5C1.2 11.5 0.3 10.6 0.3 9.5C0.3 8.3 1.2 7.5 2.4 7.4C3 5.8 4.4 5 6 5.3C7.2 2.2 9.8 0.4 12.4 0.4C15.6 0.4 18 2.8 18.2 6.4C19.8 6.8 20.7 8.2 20.7 9.6C20.7 10.6 20 11.5 19 11.5Z" fill="#f38020"/>
 <path d="M14 11.5L15.4 7.5H20.2C20.6 8.2 20.7 9 20.7 9.6C20.7 10.6 20 11.5 19 11.5Z" fill="#faae40"/>
</svg>
<div class="a" style="left:806px;top:668.5px;width:5.5px;height:2px;border-radius:1px;background:#7a7a7a"></div>
<!-- settings -->
<div class="a" style="left:828.5px;top:641.5px;width:28.5px;height:29.5px;border-radius:4px;background:#f7f6f4"></div>
<svg class="a" style="left:833px;top:647px" width="20" height="19" viewBox="0 0 20 20">
 <path d="M8.2 0.6H11.8L12.4 3.1L14.6 4.3L17 3.5L18.8 6.6L16.9 8.3V10.8L18.8 12.5L17 15.6L14.6 14.8L12.4 16L11.8 18.5H8.2L7.6 16L5.4 14.8L3 15.6L1.2 12.5L3.1 10.8V8.3L1.2 6.6L3 3.5L5.4 4.3L7.6 3.1Z" fill="#60636b" transform="translate(0 0.45)"/>
 <circle cx="10" cy="10" r="4.4" fill="#e9ecf2"/>
 <circle cx="10" cy="10" r="3.4" fill="#1a5fb8"/>
</svg>
<div class="a" style="left:837px;top:669.3px;width:12px;height:2.2px;border-radius:1px;background:#1a63c2"></div>


<!-- texts -->
<div class="x" style="left:39.00px;top:14.26px;font-size:9.5px;letter-spacing:0.08px;color:#202020;">Settings</div>
<div class="x" style="left:69.00px;top:56.39px;font-size:11px;letter-spacing:0.2px;color:#202020;-webkit-text-stroke:0.45px #202020;">dell</div>
<div class="x" style="left:69.00px;top:69.71px;font-size:9.8px;letter-spacing:-0.1px;color:#202020;">Local Account</div>
<div class="x" style="left:21.50px;top:118.12px;font-size:10.5px;letter-spacing:0.2px;color:#8a8a8a;">Find a setting</div>
<div class="x" style="left:47.00px;top:163.69px;font-size:11px;letter-spacing:0px;color:#202020;">Home</div>
<div class="x" style="left:47.00px;top:194.89px;font-size:11px;letter-spacing:0px;color:#202020;">System</div>
<div class="x" style="left:47.00px;top:226.09px;font-size:11px;letter-spacing:0.05px;color:#202020;">Bluetooth &amp; devices</div>
<div class="x" style="left:47.00px;top:257.39px;font-size:11px;letter-spacing:0px;color:#202020;">Network &amp; internet</div>
<div class="x" style="left:47.00px;top:288.69px;font-size:11px;letter-spacing:0px;color:#202020;">Personalization</div>
<div class="x" style="left:47.00px;top:319.89px;font-size:11px;letter-spacing:0px;color:#202020;">Apps</div>
<div class="x" style="left:47.00px;top:351.09px;font-size:11px;letter-spacing:0px;color:#202020;">Accounts</div>
<div class="x" style="left:47.00px;top:382.39px;font-size:11px;letter-spacing:0px;color:#202020;">Time &amp; language</div>
<div class="x" style="left:47.00px;top:413.59px;font-size:11px;letter-spacing:0px;color:#202020;">Gaming</div>
<div class="x" style="left:47.00px;top:444.89px;font-size:11px;letter-spacing:0px;color:#202020;">Accessibility</div>
<div class="x" style="left:47.00px;top:476.09px;font-size:11px;letter-spacing:0px;color:#202020;">Privacy &amp; security</div>
<div class="x" style="left:47.00px;top:507.39px;font-size:11px;letter-spacing:0px;color:#202020;">Windows Update</div>
<div class="x" style="left:325.60px;top:48.19px;font-size:22px;letter-spacing:0.2px;color:#202020;-webkit-text-stroke:0.85px #202020;">Home</div>
<div class="x" style="left:434.00px;top:103.00px;font-size:13px;letter-spacing:-0.14px;color:#202020;-webkit-text-stroke:0.45px #202020;">DESKTOP-IIP2L1K</div>
<div class="x" style="left:434.00px;top:121.54px;font-size:10px;letter-spacing:0px;color:#505050;">Inspiron 15 3511</div>
<div class="x" style="left:434.00px;top:136.12px;font-size:10.5px;letter-spacing:0px;color:#1f5fae;">Rename</div>
<div class="x" style="left:886.50px;top:109.09px;font-size:11px;letter-spacing:-0.1px;color:#202020;-webkit-text-stroke:0.45px #202020;">Kitty lau 3_5G</div>
<div class="x" style="left:886.50px;top:125.96px;font-size:9.5px;letter-spacing:-0.15px;color:#6b6b6b;">Connected, secured</div>
<div class="x" style="left:1017.00px;top:109.09px;font-size:11px;letter-spacing:0.1px;color:#202020;-webkit-text-stroke:0.45px #202020;">Windows Update</div>
<div class="x" style="left:1025.50px;top:125.54px;font-size:10px;letter-spacing:-0.1px;color:#6b6b6b;">Attention needed</div>
<div class="x" style="left:346.70px;top:231.09px;font-size:15.5px;letter-spacing:0.38px;color:#202020;-webkit-text-stroke:0.45px #202020;">It’s all here with Microsoft account</div>
<div class="x" style="left:346.70px;top:261.59px;font-size:11px;letter-spacing:0.0px;color:#6b6b6b;">Sign in to connect your favorite Microsoft apps to your device.</div>
<div class="x" style="left:381.50px;top:340.69px;font-size:11px;letter-spacing:0.08px;color:#202020;">Sign in</div>
<div class="x" style="left:346.30px;top:407.69px;font-size:15.5px;letter-spacing:0.27px;color:#202020;-webkit-text-stroke:0.45px #202020;">Bluetooth devices</div>
<div class="x" style="left:346.70px;top:437.39px;font-size:11px;letter-spacing:-0.15px;color:#6b6b6b;">Manage, add, and remove devices</div>
<div class="x" style="left:380.50px;top:485.39px;font-size:11px;letter-spacing:0.25px;color:#202020;">Bluetooth</div>
<div class="x" style="left:380.50px;top:499.39px;font-size:9px;letter-spacing:-0.12px;color:#6b6b6b;">Discoverable as "DESKTOP-IIP2L1K"</div>
<div class="x" style="left:639.30px;top:491.39px;font-size:11px;letter-spacing:0.4px;color:#202020;">On</div>
<div class="x" style="left:380.50px;top:538.99px;font-size:11px;letter-spacing:-0.05px;color:#202020;">AirPods von Meohihi</div>
<div class="x" style="left:390.00px;top:553.26px;font-size:9.5px;letter-spacing:0px;color:#6b6b6b;">Connected mic, audio</div>
<div class="x" style="left:347.50px;top:600.12px;font-size:10.5px;letter-spacing:0px;color:#202020;">View all devices</div>
<div class="x" style="left:596.50px;top:599.69px;font-size:11px;letter-spacing:-0.16px;color:#202020;">Add device</div>
<div class="x" style="left:740.00px;top:195.59px;font-size:15.5px;letter-spacing:0.2px;color:#202020;-webkit-text-stroke:0.45px #202020;">Recommended settings</div>
<div class="x" style="left:740.00px;top:225.39px;font-size:11px;letter-spacing:-0.09px;color:#6b6b6b;">Recent and commonly used settings</div>
<div class="x" style="left:774.20px;top:279.59px;font-size:11px;letter-spacing:-0.12px;color:#202020;">Printers &amp; scanners</div>
<div class="x" style="left:774.40px;top:333.19px;font-size:11px;letter-spacing:-0.1px;color:#202020;">Installed apps</div>
<div class="x" style="left:774.20px;top:387.19px;font-size:11px;letter-spacing:-0.1px;color:#202020;">Search permissions</div>
<div class="x" style="left:740.00px;top:447.69px;font-size:15.5px;letter-spacing:0.03px;color:#202020;-webkit-text-stroke:0.45px #202020;">Personalize your device</div>
<div class="x" style="left:406.00px;top:651.72px;font-size:10.5px;letter-spacing:-0.1px;color:#5a5a5a;">Search</div>
<!-- annotation -->
<div class="a" style="left:7px;top:425px;width:160px;height:42.5px;border:3.5px solid #f22b2b"></div>
<div class="a" style="left:201.5px;top:418.3px;font-size:52px;line-height:56px;font-weight:bold;color:#f22b2b;-webkit-text-stroke:2.4px #f22b2b;transform:scaleX(1.08);transform-origin:0 0">2</div>
<div class="a" style="left:1018px;top:128px;width:3px;height:3px;border-radius:50%;background:#2a72c8"></div>

</body></html>
